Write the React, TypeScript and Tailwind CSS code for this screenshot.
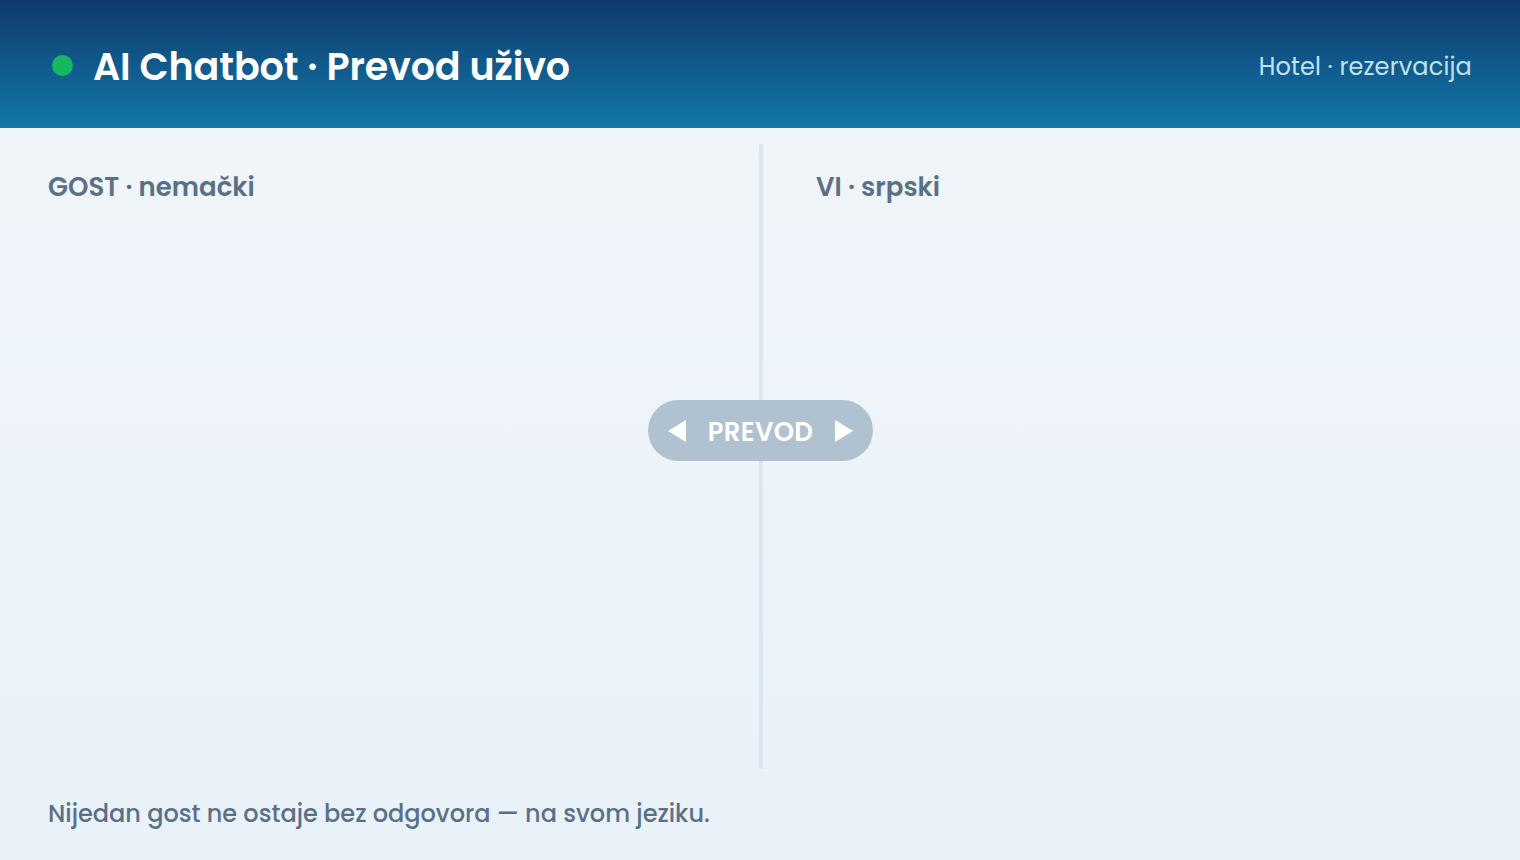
import { Fragment } from "react";

const font = { fontFamily: "Poppins, 'Open Sans', 'Noto Sans', sans-serif" };

const panels = [
  { label: "GOST · nemački", cls: "w-[711px] shrink-0" },
  { label: "VI · srpski", cls: "flex-1 pl-[53px]" },
];

export default function App() {
  return (
    <div
      className="w-[1520px] h-[860px] flex flex-col overflow-hidden bg-gradient-to-b from-[#f1f6fa] to-[#e9f1f9]"
      style={font}
    >
      {/* top bar */}
      <header className="h-32 shrink-0 flex items-center justify-between px-12 pt-[5px] bg-gradient-to-b from-[#0f3a6d] to-[#1179aa]">
        <div className="flex items-center gap-5 pl-1">
          <span className="w-[21px] h-[21px] rounded-full bg-[#16b761] -mt-[3px]" />
          <h1 className="text-[38px] font-semibold text-white tracking-[-0.1px]">
            AI Chatbot · Prevod uživo
          </h1>
        </div>
        <span className="text-[24px] text-[#c2e3f5] tracking-[0.15px]">Hotel · rezervacija</span>
      </header>

      {/* two language columns */}
      <main className="relative flex-1 flex px-12 pt-4">
        {panels.map((p, i) => (
          <Fragment key={p.label}>
            {i === 1 && <div className="w-[4px] bg-[#d9e6f0]" />}
            <section className={`pt-[24px] ${p.cls}`}>
              <h2 className="text-[26px] font-semibold text-[#5a7086]">{p.label}</h2>
            </section>
          </Fragment>
        ))}

        <div className="absolute left-[648px] top-[272px] w-[225px] h-[61px] rounded-full bg-[#b0c2cf] flex items-center justify-center gap-[22px]">
          <svg width="18" height="22" viewBox="0 0 18 22">
            <path d="M18 0 L0 11 L18 22 Z" fill="#fff" />
          </svg>
          <span className="text-[26px] font-semibold text-white tracking-[0.3px] pt-[4px]">PREVOD</span>
          <svg width="18" height="22" viewBox="0 0 18 22">
            <path d="M0 0 L18 11 L0 22 Z" fill="#fff" />
          </svg>
        </div>
      </main>

      <footer className="px-12 pt-[27px] pb-[28px]">
        <p className="text-[24px] font-medium text-[#5a7086]">
          Nijedan gost ne ostaje bez odgovora — na svom jeziku.
        </p>
      </footer>
    </div>
  );
}
